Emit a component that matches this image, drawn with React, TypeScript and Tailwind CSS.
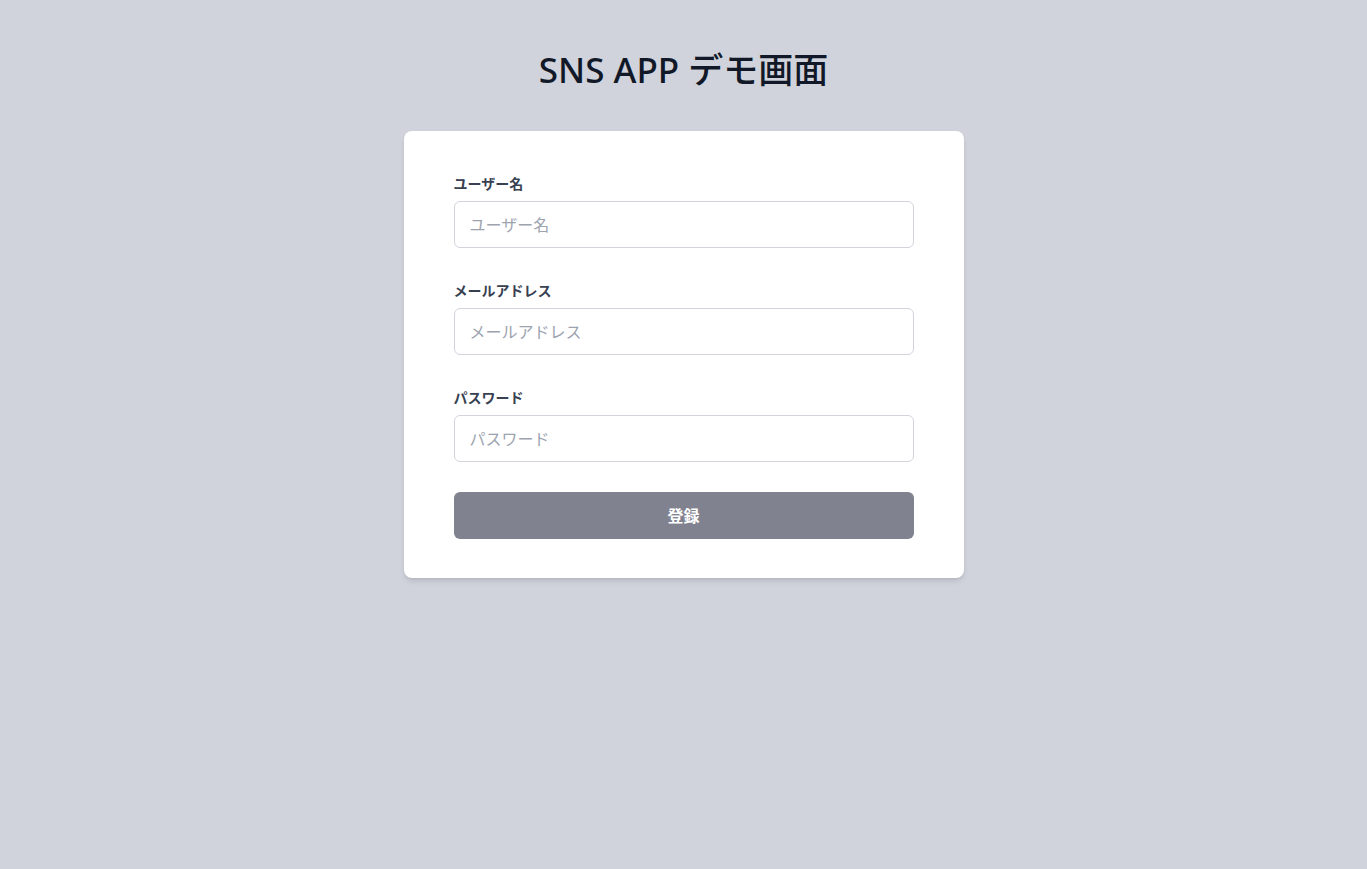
import React from "react";

const fields = [
  { label: "ユーザー名", type: "text" },
  { label: "メールアドレス", type: "email" },
  { label: "パスワード", type: "password" },
];

export default function App() {
  return (
    <div
      className="min-h-screen bg-[#d0d3db] flex flex-col items-center"
      style={{ fontFamily: '"Noto Sans", "Noto Sans CJK JP", sans-serif' }}
    >
      <h1 className="mt-[50px] text-[35px] leading-[40px] font-medium text-[#111827]">
        SNS APP デモ画面
      </h1>
      <div className="mt-[41px] w-[560px] bg-white rounded-lg shadow-md px-[50px] pt-[43px] pb-[39px]">
        <form className="flex flex-col" onSubmit={(e) => e.preventDefault()}>
          {fields.map((f, i) => (
            <div key={f.label} className={i > 0 ? "mt-[33px]" : ""}>
              <label className="block text-sm leading-5 font-semibold text-[#374151] mb-[7px]">
                {f.label}
              </label>
              <input
                type={f.type}
                placeholder={f.label}
                className="block w-full h-[47px] px-[15px] rounded-md border border-[#d1d5db] text-base text-gray-700 placeholder:text-[#9ca3af] outline-none"
              />
            </div>
          ))}
          <button
            type="submit"
            className="mt-[30px] h-[47px] w-full rounded-md bg-[#81828f] text-white font-bold text-base"
          >
            登録
          </button>
        </form>
      </div>
    </div>
  );
}
